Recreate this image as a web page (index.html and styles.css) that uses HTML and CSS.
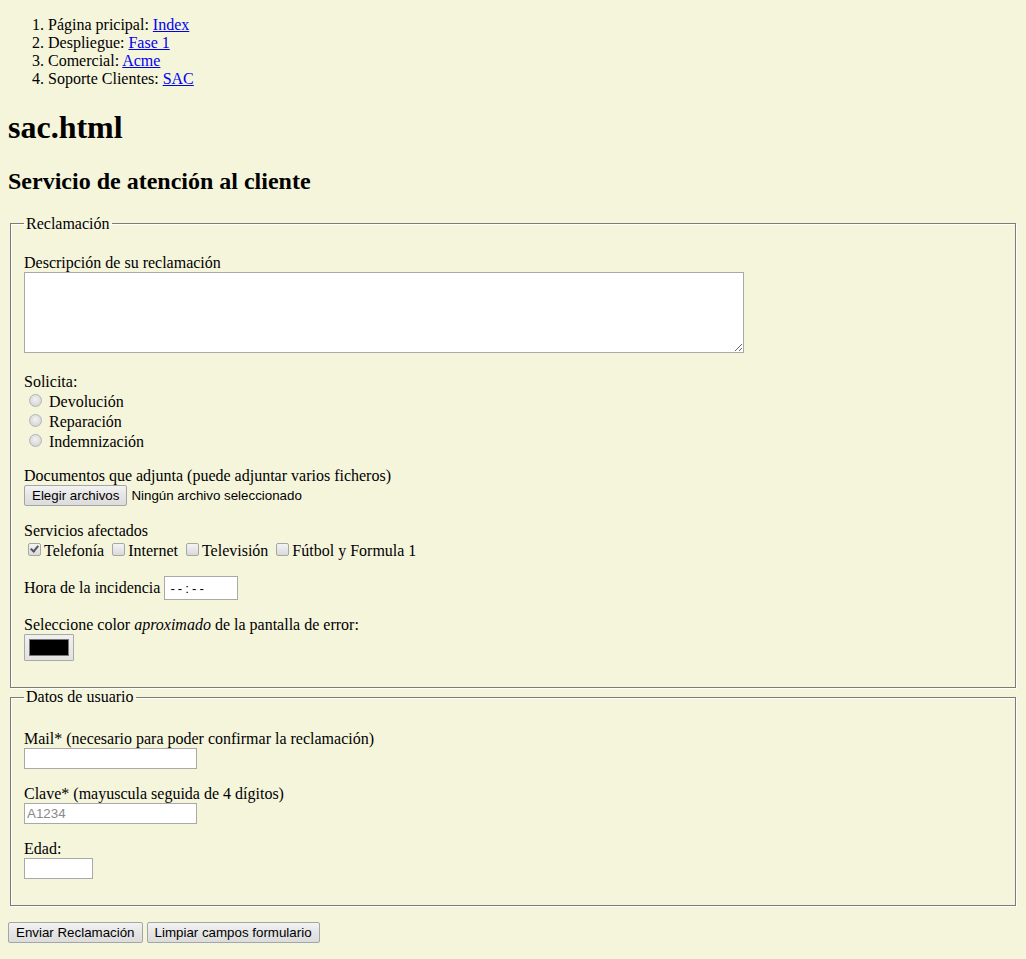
FILE: index.html
```html
<!DOCTYPE html>
<html lang="es">
<head>
<meta charset="utf-8">
<title>sac.html</title>
<link rel="stylesheet" href="styles.css">
</head>
<body>
<ol class="nav">
  <li>Página pricipal: <a href="#">Index</a></li>
  <li>Despliegue: <a href="#">Fase 1</a></li>
  <li>Comercial: <a href="#">Acme</a></li>
  <li>Soporte Clientes: <a href="#">SAC</a></li>
</ol>
<h1>sac.html</h1>
<h2>Servicio de atención al cliente</h2>
<form>
  <fieldset class="group">
    <legend>Reclamación</legend>
    <p>Descripción de su reclamación<br><textarea class="desc"></textarea></p>
    <p>Solicita:<br>
      <input type="radio" name="solicita" class="radio"> Devolución<br>
      <input type="radio" name="solicita" class="radio"> Reparación<br>
      <input type="radio" name="solicita" class="radio"> Indemnización
    </p>
    <p>Documentos que adjunta (puede adjuntar varios ficheros)<br><button type="button" class="btn">Elegir archivos</button> <span class="file-name">Ningún archivo seleccionado</span></p>
    <p>Servicios afectados<br><input type="checkbox" class="check" checked>Telefonía <input type="checkbox" class="check">Internet <input type="checkbox" class="check">Televisión <input type="checkbox" class="check">Fútbol y Formula 1</p>
    <p>Hora de la incidencia <input type="text" class="field time" placeholder="--:--"></p>
    <p>Seleccione color <em>aproximado</em> de la pantalla de error:<br><input type="color" class="color" value="#000000"></p>
  </fieldset>
  <fieldset class="group group-user">
    <legend>Datos de usuario</legend>
    <p>Mail* (necesario para poder confirmar la reclamación)<br><input type="email" class="field"></p>
    <p>Clave* (mayuscula seguida de 4 dígitos)<br><input type="text" class="field" placeholder="A1234"></p>
    <p>Edad:<br><input type="text" class="field age"></p>
  </fieldset>
  <p><button type="submit" class="btn">Enviar Reclamación</button> <button type="reset" class="btn">Limpiar campos formulario</button></p>
</form>
</body>
</html>
```

FILE: styles.css
```css
html {
  background: #f5f5dc;
}
body {
  margin: 0;
  padding: 8px;
  font-family: "Liberation Serif", "Times New Roman", serif;
  font-size: 16px;
  color: #000;
  background: #f5f5dc;
}
a {
  color: #0000ee;
}
.nav {
  margin: 8px 0 16px;
  padding-left: 40px;
}
h1 {
  font-size: 32px;
  margin: 21.44px 0;
}
h2 {
  font-size: 24px;
  margin: 19.92px 0;
}
form {
  margin: 0;
}
.group {
  margin: 0 2px;
  padding: 5.6px 13px 10px;
  border: 1px solid #7b7b7b;
  box-shadow: 1px 1px 0 #fff, inset 1px 1px 0 #fff;
}
.group-user {
  padding-top: 7.6px;
}
.group legend {
  padding: 0 2px;
}
p {
  margin: 16px 0;
}
.desc {
  box-sizing: border-box;
  width: 720px;
  height: 81px;
  margin: 0;
  padding: 2px;
  border: 1px solid #a9a9a9;
  background: #fff;
  font-family: "Liberation Mono", monospace;
  font-size: 13.33px;
  vertical-align: baseline;
}
.radio {
  -webkit-appearance: none;
  appearance: none;
  box-sizing: border-box;
  width: 13px;
  height: 13px;
  margin: 3px 3px 0 5px;
  border: 1px solid #b4b4b4;
  border-radius: 50%;
  background: radial-gradient(circle at 50% 40%, #f2f2f2 0%, #dcdcdc 60%, #cfcfcf 100%);
  vertical-align: baseline;
}
.check {
  -webkit-appearance: none;
  appearance: none;
  box-sizing: border-box;
  position: relative;
  width: 13px;
  height: 13px;
  margin: 3px 3px 0 4px;
  border: 1px solid #a6a6a6;
  border-radius: 2px;
  background: linear-gradient(#f4f4f4, #d9d9d9);
  vertical-align: baseline;
}
.check:checked::before {
  content: "";
  position: absolute;
  left: 3px;
  top: 0;
  width: 3px;
  height: 6px;
  border: solid #555;
  border-width: 0 2px 2px 0;
  transform: rotate(40deg);
}
.btn {
  box-sizing: border-box;
  height: 21px;
  margin: 0;
  padding: 1px 7px;
  font-family: "Liberation Sans", Arial, sans-serif;
  font-size: 13.33px;
  color: #000;
  border: 1px solid #a5a5a5;
  border-radius: 2px;
  background: linear-gradient(#f3f3f3, #e6e6e6 45%, #dcdcdc);
}
.file-name {
  font-family: "Liberation Sans", Arial, sans-serif;
  font-size: 13.33px;
}
.field {
  box-sizing: border-box;
  width: 173px;
  height: 21px;
  margin: 0;
  padding: 1px 2px;
  border: 1px solid #a9a9a9;
  background: #fff;
  font-family: "Liberation Sans", Arial, sans-serif;
  font-size: 13.33px;
}
.field::placeholder {
  color: #8a8a8a;
}
.time {
  width: 74px;
  height: 24px;
  padding: 1px 5px;
  letter-spacing: 3px;
}
.time::placeholder {
  color: #000;
}
.age {
  width: 69px;
}
.color {
  -webkit-appearance: none;
  appearance: none;
  box-sizing: border-box;
  width: 50px;
  height: 27px;
  margin: 0;
  padding: 4px;
  border: 1px solid #a9a9a9;
  border-radius: 1px;
  background: linear-gradient(#f0f0f0, #e2e2e2);
  vertical-align: baseline;
}
.color::-webkit-color-swatch-wrapper {
  padding: 0;
}
.color::-webkit-color-swatch {
  border: 1px solid #777;
  border-radius: 0;
}
```
